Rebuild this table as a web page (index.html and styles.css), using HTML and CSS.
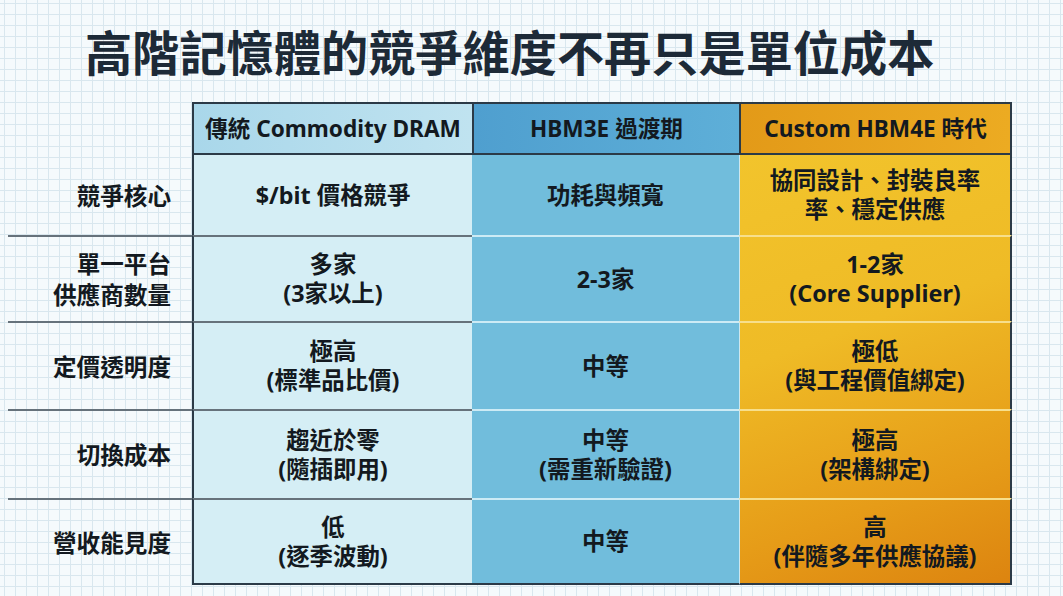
FILE: index.html
```html
<!DOCTYPE html>
<html lang="zh-Hant">
<head>
<meta charset="utf-8">
<title>高階記憶體的競爭維度不再只是單位成本</title>
<link rel="stylesheet" href="styles.css">
</head>
<body>
<div class="page">
  <h1 class="title">高階記憶體的競爭維度不再只是單位成本</h1>
  <div class="matrix">
    <div class="corner"></div>
    <div class="hd h1c">傳統 Commodity DRAM</div>
    <div class="hd h2c">HBM3E 過渡期</div>
    <div class="hd h3c">Custom HBM4E 時代</div>

    <div class="lbl r1">競爭核心</div>
    <div class="cell c1 r1">$/bit 價格競爭</div>
    <div class="cell c2 r1">功耗與頻寬</div>
    <div class="cell c3 r1">協同設計、封裝良率<br>率、穩定供應</div>

    <div class="lbl r2">單一平台<br>供應商數量</div>
    <div class="cell c1 r2">多家<br>(3家以上)</div>
    <div class="cell c2 r2">2-3家</div>
    <div class="cell c3 r2">1-2家<br>(Core Supplier)</div>

    <div class="lbl r3">定價透明度</div>
    <div class="cell c1 r3">極高<br>(標準品比價)</div>
    <div class="cell c2 r3">中等</div>
    <div class="cell c3 r3">極低<br>(與工程價值綁定)</div>

    <div class="lbl r4">切換成本</div>
    <div class="cell c1 r4">趨近於零<br>(隨插即用)</div>
    <div class="cell c2 r4">中等<br>(需重新驗證)</div>
    <div class="cell c3 r4">極高<br>(架構綁定)</div>

    <div class="lbl r5">營收能見度</div>
    <div class="cell c1 r5">低<br>(逐季波動)</div>
    <div class="cell c2 r5">中等</div>
    <div class="cell c3 r5">高<br>(伴隨多年供應協議)</div>
  </div>
</div>
</body>
</html>
```

FILE: styles.css
```css
* { box-sizing: border-box; }

html, body {
  margin: 0;
  padding: 0;
}

body {
  width: 1063px;
  height: 596px;
  overflow: hidden;
  font-family: "Noto Sans", "Noto Sans CJK TC", sans-serif;
}

.page {
  width: 1063px;
  height: 596px;
  background-color: #f5fafc;
  background-image:
    linear-gradient(#d9e7ee 1px, transparent 1px),
    linear-gradient(90deg, #d9e7ee 1px, transparent 1px);
  background-size: 11px 11px;
  background-position: 4px 3px;
}

.title {
  margin: 0;
  height: 102px;
  padding: 21px 0 0 85px;
  font-family: "Noto Sans CJK TC", sans-serif;
  font-weight: 700;
  font-size: 47.2px;
  line-height: 60px;
  color: #1d2a37;
}

.matrix {
  display: grid;
  grid-template-columns: 184px 280px 267px 273px;
  grid-template-rows: 53px 80px 86px 88px 89px 87px;
  margin-left: 8px;
  color: #131920;
  font-weight: 700;
  font-size: 23.4px;
  line-height: 29px;
}

.hd, .cell, .lbl {
  display: flex;
  align-items: center;
  justify-content: center;
  text-align: center;
}

.hd {
  border-top: 2px solid #2b3a47;
  border-bottom: 2px solid #2b3a47;
  border-left: 2px solid #2b3a47;
  font-size: 22.6px;
}

.h1c { background: linear-gradient(90deg, #a9d7ea, #c0e3f0); }
.h2c { background: linear-gradient(90deg, #4f9fcf, #5eafd8); }
.h3c {
  background: linear-gradient(90deg, #e39a18, #ecab22);
  border-right: 2px solid #2b3a47;
}

.lbl {
  justify-content: flex-end;
  text-align: right;
  padding-right: 21px;
  font-family: "Noto Sans CJK TC", sans-serif;
  font-size: 23.6px;
  line-height: 31px;
}

.lbl.r2, .lbl.r3, .lbl.r4, .lbl.r5 {
  border-top: 2px solid #66727b;
}

.c1 {
  background: #d5eef5;
  border-left: 2px solid #2b3a47;
}
.c1.r2, .c1.r3, .c1.r4, .c1.r5 {
  border-top: 2px solid #66727b;
}

.c2 {
  background: #71bddc;
}
.c2.r2, .c2.r3, .c2.r4, .c2.r5 {
  border-top: 2px solid #cdebf5;
}

.c3 {
  background-image: linear-gradient(160deg, #f2c42c 0%, #efbb26 40%, #e69c18 75%, #dc830f 100%);
  background-size: 273px 430px;
  border-left: 1px solid #cde6ee;
  border-right: 2px solid #2b3a47;
}
.c3.r2, .c3.r3, .c3.r4, .c3.r5 {
  border-top: 2px solid #f7df8c;
}
.c3.r1 { background-position: 0 0; }
.c3.r2 { background-position: 0 -80px; }
.c3.r3 { background-position: 0 -166px; }
.c3.r4 { background-position: 0 -254px; }
.c3.r5 { background-position: 0 -343px; }

.cell.r5 {
  border-bottom: 2px solid #2b3a47;
}
```
